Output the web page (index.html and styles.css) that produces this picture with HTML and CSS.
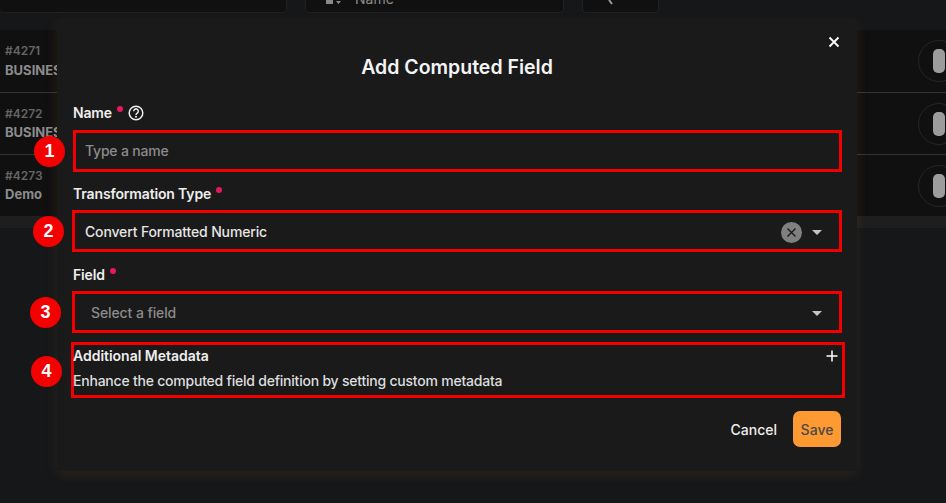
FILE: index.html
```html
<!DOCTYPE html>
<html lang="en">
<head>
<meta charset="utf-8">
<title>Add Computed Field</title>
<link rel="stylesheet" href="styles.css">
</head>
<body>
<div class="page">
  <div class="toolbar">
    <div class="tool tool-wide"></div>
    <div class="tool tool-name">
      <svg class="tool-icon" width="18" height="6" viewBox="0 0 18 6"><path d="M1 0v4h7V0zM11 1l2.500 3L16 1z" fill="#8a8a8a"/></svg>
      <span>Name</span>
    </div>
    <div class="tool tool-search"><svg width="12" height="6" viewBox="0 0 12 6"><path d="M4 0l3 4" stroke="#9a9a9a" stroke-width="2" fill="none"/></svg></div>
  </div>
  <div class="table">
    <div class="row">
      <div class="row-text"><span class="row-id">#4271</span><span class="row-name">BUSINESS</span></div>
      <div class="ring"><span class="pill"></span></div>
    </div>
    <div class="row">
      <div class="row-text"><span class="row-id">#4272</span><span class="row-name">BUSINESS</span></div>
      <div class="ring"><span class="pill"></span></div>
    </div>
    <div class="row">
      <div class="row-text"><span class="row-id">#4273</span><span class="row-name">Demo</span></div>
      <div class="ring"><span class="pill"></span></div>
    </div>
  </div>
  <div class="strip"></div>
</div>

<div class="modal">
  <button class="close" aria-label="Close">
    <svg width="12" height="12" viewBox="0 0 12 12"><path d="M1.500 1.500l9 9M10.500 1.500l-9 9" stroke="#fff" stroke-width="1.800" fill="none"/></svg>
  </button>
  <h1 class="title">Add Computed Field</h1>

  <div class="label label-name">Name <span class="dot"></span>
    <svg class="help" width="16" height="16" viewBox="0 0 16 16"><circle cx="8" cy="8" r="6.800" stroke="#eee" stroke-width="1.500" fill="none"/><path d="M5.700 6.300a2.300 2.300 0 1 1 3.600 1.800c-.9.600-1.300 1-1.300 1.800" stroke="#eee" stroke-width="1.500" fill="none"/><circle cx="8" cy="11.800" r="1" fill="#eee"/></svg>
  </div>
  <div class="box box-name">
    <span class="badge badge-name">1</span>
    <span class="placeholder">Type a name</span>
  </div>

  <div class="label label-type">Transformation Type <span class="dot"></span></div>
  <div class="box box-type">
    <span class="badge badge-type">2</span>
    <span class="value">Convert Formatted Numeric</span>
    <svg class="clear" width="21" height="21" viewBox="0 0 21 21"><circle cx="10.500" cy="10.500" r="10.500" fill="#808080"/><path d="M6.500 6.500l8 8M14.500 6.500l-8 8" stroke="#1a1a1a" stroke-width="1.400"/></svg>
    <span class="caret"></span>
  </div>

  <div class="label label-field">Field <span class="dot"></span></div>
  <div class="box box-field">
    <span class="badge badge-field">3</span>
    <span class="placeholder">Select a field</span>
    <span class="caret"></span>
  </div>

  <div class="meta">
    <span class="badge badge-meta">4</span>
    <div class="meta-head">
      <span class="meta-title">Additional Metadata</span>
      <svg width="12" height="12" viewBox="0 0 12 12"><path d="M6 .5v11M.5 6h11" stroke="#fff" stroke-width="1.500"/></svg>
    </div>
    <div class="meta-text">Enhance the computed field definition by setting custom metadata</div>
  </div>

  <div class="actions">
    <button class="cancel">Cancel</button>
    <button class="save">Save</button>
  </div>
</div>
</body>
</html>
```
FILE: styles.css
```css
* { box-sizing: border-box; }
html, body { margin: 0; height: 100%; }
body {
  width: 946px;
  height: 503px;
  overflow: hidden;
  position: relative;
  background: #151719;
  font-family: Inter, "Noto Sans", sans-serif;
}
.page { display: flex; flex-direction: column; height: 503px; }

.toolbar { display: flex; gap: 18px; height: 13px; flex: none; }
.tool {
  background: #101011;
  border: 1px solid #202122;
  border-top: 0;
  border-radius: 0 0 4px 4px;
  height: 13px;
  overflow: hidden;
}
.tool-wide { width: 288px; margin-left: -1px; }
.tool-name {
  width: 259px;
  display: flex;
  align-items: flex-end;
  gap: 12px;
  padding: 0 0 6px 19px;
  color: #8a8a8a;
  font-size: 14px;
  line-height: 14px;
}
.tool-name span { display: block; }
.tool-icon { flex: none; }
.tool-search { width: 77px; padding-left: 22px; }
.tool-search svg { display: block; }

.table { margin-top: 17px; flex: none; display: flex; flex-direction: column; }
.row {
  height: 62px;
  background: #101011;
  display: flex;
  justify-content: space-between;
  align-items: center;
  padding-left: 5px;
  overflow: hidden;
}
.row + .row { border-top: 1px solid #333; }
.row-text { display: flex; flex-direction: column; gap: 3px; }
.row + .row .row-text { gap: 2px; }
.row-id { color: #666; font-size: 12px; font-weight: 600; line-height: 16px; }
.row-name { color: #8c8c8c; font-size: 13px; font-weight: 700; line-height: 17px; }
.ring {
  width: 42px;
  height: 42px;
  border: 1px solid #262626;
  border-radius: 50%;
  margin-right: -14px;
  flex: none;
  display: flex;
  align-items: center;
  justify-content: center;
}
.pill { width: 12px; height: 24px; border-radius: 5px; background: #9c9c9c; }
.strip { height: 12px; background: #1e1e1e; flex: none; }

.modal {
  position: absolute;
  left: 57px;
  top: 19px;
  width: 800px;
  height: 452px;
  background: #1a1a1a;
  box-shadow: 0 4px 12px rgba(255, 150, 50, 0.1);
  padding: 0 15px;
}
.close {
  position: absolute;
  top: 17px;
  right: 17px;
  width: 12px;
  height: 12px;
  padding: 0;
  border: 0;
  background: none;
  display: block;
}
.close svg { display: block; }
.title {
  margin: 36px 0 0;
  text-align: center;
  color: #f4f4f4;
  font-size: 19.500px;
  line-height: 24px;
  font-weight: 600;
}

.label {
  display: flex;
  align-items: center;
  color: #eeeeee;
  font-size: 14px;
  line-height: 18px;
  font-weight: 600;
  letter-spacing: -0.150px;
  margin-left: 1px;
}
.label-name { margin-top: 25px; }
.label-type { margin-top: 13px; }
.label-field { margin-top: 14px; }
.dot {
  width: 6px;
  height: 6px;
  border-radius: 50%;
  background: #e6195f;
  margin: -8px 0 0 5px;
  flex: none;
}
.help { margin-left: 5px; flex: none; }

.box {
  position: relative;
  display: flex;
  align-items: center;
  border: 3px solid #f50000;
  height: 42px;
  color: #e6e6e6;
  font-size: 14px;
  line-height: 18px;
  font-weight: 500;
}
.box-name { margin: 8px 0 0 1px; padding-left: 9px; }
.box-type { margin-top: 7px; padding: 2px 0 0 10px; }
.box-field { margin-top: 7px; padding: 2px 0 0 16px; }
.placeholder { color: #8b8b8b; letter-spacing: -0.200px; }
.value { flex: 1; letter-spacing: -0.150px; }
.box-field .placeholder { flex: 1; letter-spacing: -0.100px; }
.clear { flex: none; margin-right: 10px; }
.caret {
  width: 0;
  height: 0;
  border-left: 5.500px solid transparent;
  border-right: 5.500px solid transparent;
  border-top: 5px solid #c4c4c4;
  margin-right: 17px;
  flex: none;
}

.meta {
  position: relative;
  margin: 9px -3px 0 -1px;
  height: 56px;
  border: 3px solid #f50000;
  color: #eee;
  font-size: 14px;
  line-height: 18px;
}
.meta-head {
  display: flex;
  justify-content: space-between;
  align-items: center;
  height: 18px;
  margin-top: 2px;
  padding-right: 4px;
}
.meta-title { font-weight: 600; margin-left: -1px; letter-spacing: -0.020px; }
.meta-text { margin: 7px 0 0 -1px; color: #dedede; font-weight: 500; letter-spacing: -0.220px; white-space: nowrap; }

.badge {
  position: absolute;
  width: 31px;
  height: 31px;
  border-radius: 50%;
  background: #f50000;
  color: #fff;
  font-family: "Liberation Sans", Arial, sans-serif;
  font-size: 18px;
  font-weight: 700;
  line-height: 31px;
  letter-spacing: 0;
  text-align: center;
  top: 50%;
  margin-top: -15.500px;
}
.badge-name { left: -42px; }
.badge-type { left: -42px; }
.badge-field { left: -45px; }
.badge-meta { left: -43px; margin-top: -14px; }

.actions {
  display: flex;
  justify-content: flex-end;
  align-items: center;
  gap: 16px;
  margin-top: 13px;
  padding-right: 1px;
}
.cancel, .save { font-family: inherit; font-size: 14px; border: 0; padding: 0; }
.cancel { background: none; color: #eee; font-weight: 500; }
.save {
  width: 48px;
  height: 36px;
  background: #ff9a33;
  color: #4a4a48;
  border-radius: 7px;
  font-weight: 500;
}
```
